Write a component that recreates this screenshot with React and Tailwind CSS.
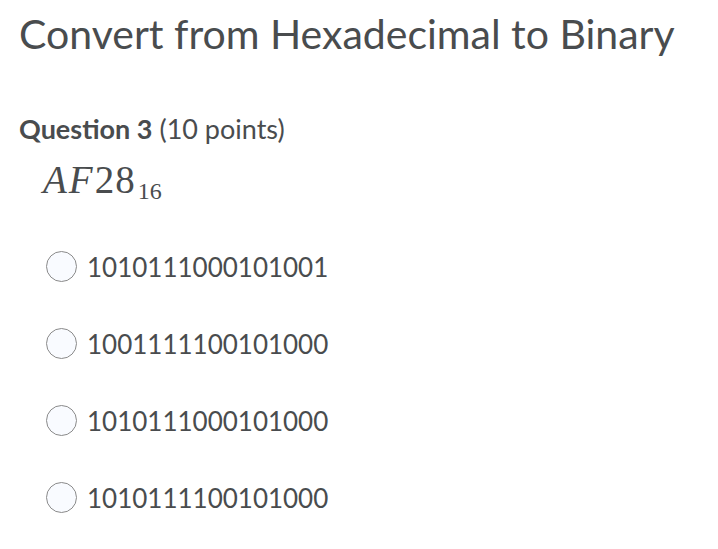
export default function App() {
  const options = [
    "1010111000101001",
    "1001111100101000",
    "1010111000101000",
    "1010111100101000",
  ];
  return (
    <div className="w-[718px] h-[549px] bg-white text-[#494c4e] overflow-hidden" style={{ fontFamily: "Lato, 'Noto Sans', sans-serif" }}>
      <div className="pl-[19px] pt-[9px]">
        <h1 className="text-[41px] leading-[50px] font-normal">Convert from Hexadecimal to Binary</h1>
        <div className="mt-[54px] text-[27px] leading-[32px]">
          <span className="font-bold">Question 3</span> <span>(10 points)</span>
        </div>
        <div className="mt-[13px] pl-[24px] text-[39px] leading-[44px] whitespace-nowrap" style={{ fontFamily: "'Liberation Serif', serif" }}>
          <span className="italic tracking-[2px]">AF</span>
          <span className="tracking-[1px]">28</span>
          <span className="inline-block text-[24px] leading-none relative top-[6px] ml-[2px]">16</span>
        </div>
        <div className="mt-[26px] pl-[27px] flex flex-col">
          {options.map((o) => (
            <label key={o} className="h-[77px] flex items-center gap-[10px]">
              <span className="w-[31px] h-[31px] rounded-full border border-[#8a8a8a] bg-[#f9fbff] shrink-0" />
              <span className="text-[26px] leading-[30px]">{o}</span>
            </label>
          ))}
        </div>
      </div>
    </div>
  );
}
